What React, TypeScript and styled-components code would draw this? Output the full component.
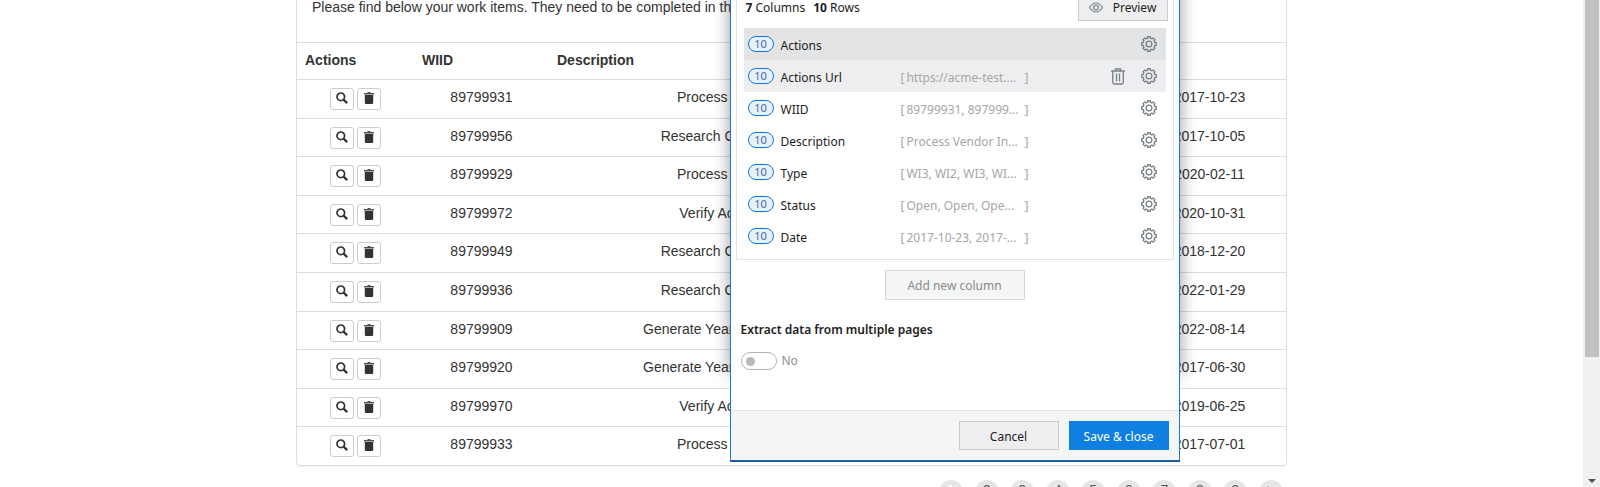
import React from "react";
import styled, { createGlobalStyle, css } from "styled-components";

const ui = `"Noto Sans", "Open Sans", sans-serif`;
const web = `"Liberation Sans", Arial, sans-serif`;

const GlobalStyle = createGlobalStyle`
  *, *::before, *::after { box-sizing: border-box; }
  body { margin: 0; background: #fff; overflow: hidden; }
  button { font: inherit; cursor: pointer; }
`;

const Viewport = styled.div`
  position: relative;
  display: flex;
  height: 100vh;
  overflow: hidden;
`;

const Page = styled.main`
  position: relative;
  flex: 1;
  min-width: 0;
  overflow: hidden;
  font: 14px/20px ${web};
  color: #333;
`;

const Container = styled.div`
  max-width: 991px;
  margin: -9px auto 0;
`;

const Panel = styled.section`
  border: 1px solid #ddd;
  border-radius: 4px;
  box-shadow: 0 1px 1px rgba(0, 0, 0, 0.05);
`;

const Intro = styled.p`
  margin: 0;
  padding: 5px 15px 25px;
  white-space: nowrap;
  overflow: hidden;
`;

const Table = styled.table`
  width: 100%;
  height: 423px;
  border-collapse: collapse;
  table-layout: fixed;
  line-height: 18px;
`;

const HeadCell = styled.th<{ $width?: number }>`
  width: ${(p) => (p.$width ? `${p.$width}px` : "auto")};
  height: 37px;
  padding: 8px;
  border-top: 1px solid #ddd;
  text-align: left;
  vertical-align: top;
`;

const Cell = styled.td`
  padding: 8px 8px 7px;
  border-top: 1px solid #ddd;
  text-align: center;
  vertical-align: top;
  white-space: nowrap;
`;

const CellActions = styled.div`
  display: flex;
  justify-content: center;
  gap: 3px;
`;

const TinyButton = styled.button`
  display: flex;
  align-items: center;
  justify-content: center;
  width: 24px;
  height: 22px;
  padding: 0 0 2px;
  border: 1px solid #ccc;
  border-radius: 3px;
  background: #fff;
  color: #333;
`;

const Pager = styled.nav`
  display: flex;
  justify-content: space-between;
  width: 344px;
  margin: 14px 4px 0 auto;
`;

const PagerButton = styled.button<{ $current?: boolean }>`
  width: 24px;
  height: 24px;
  padding: 0 0 4px;
  border: 0;
  border-radius: 50%;
  background: #e6e6e6;
  color: ${(p) => (p.$current ? "#fff" : "#555")};
  font-weight: ${(p) => (p.$current ? 700 : 400)};
  line-height: 20px;
`;

const Scrollbar = styled.div`
  display: flex;
  flex-direction: column;
  justify-content: space-between;
  align-items: center;
  width: 17px;
  background: #f0f0f0;
`;

const Thumb = styled.div`
  width: 14px;
  height: 357px;
  background: #c1c1c1;
`;

const ArrowDown = styled.div`
  margin-bottom: 4px;
  border: 4px solid transparent;
  border-top-color: #505050;
  border-bottom: 0;
`;

const Dialog = styled.div`
  position: absolute;
  top: -21px;
  left: calc(50% - 62px);
  width: 450px;
  font: 12px/18px ${ui};
  color: #1c1c1c;

  &::before {
    content: "";
    position: absolute;
    inset: 0 0 88px;
    box-shadow: 0 0 16px rgba(0, 0, 0, 0.4);
  }
`;

const DialogFrame = styled.div`
  position: relative;
  border: 1px solid #1976d2;
  border-bottom: 2px solid #1b5e9f;
  background: #fff;
`;

const ColumnsBox = styled.section`
  margin: 0 5px;
  padding: 12px 7px 7px;
  border: 1px solid #e1e3e5;
  border-top: 0;
`;

const Summary = styled.header`
  display: flex;
  justify-content: space-between;
  align-items: center;
  margin: 0 -2px 7px 2px;
`;

const Counts = styled.p`
  display: flex;
  gap: 8px;
  margin: 0;
  padding-top: 2px;

  b { font-weight: 700; }
`;

const PlainButton = styled.button<{ $tone?: "muted" | "primary"; $width: number; $tall?: boolean }>`
  display: flex;
  align-items: center;
  justify-content: center;
  gap: 10px;
  width: ${(p) => p.$width}px;
  height: ${(p) => (p.$tall ? 30 : 29)}px;
  padding: 2px 0 0;
  border: 1px solid #c8cacc;
  background: #eeeef0;
  color: #1c1c1c;
  ${(p) => p.$tone === "muted" && css`
    border-color: #d6d8da;
    background: #f4f6f6;
    color: #8a8a8a;
  `}
  ${(p) => p.$tone === "primary" && css`
    border-color: #0f7fe2;
    background: #0f7fe2;
    color: #fff;
  `}
`;

const ColumnList = styled.ul`
  margin: 0;
  padding: 0;
  list-style: none;
`;

const ColumnRow = styled.li<{ $shade?: string }>`
  display: flex;
  align-items: center;
  height: 32px;
  padding: 0 9px 0 4px;
  background: ${(p) => p.$shade ?? "transparent"};
`;

const Badge = styled.span`
  width: 26px;
  height: 16px;
  margin-right: 7px;
  border: 1px solid #1976d2;
  border-radius: 8px;
  background: #e8f0fa;
  color: #3a6cab;
  font-size: 11px;
  line-height: 14px;
  text-align: center;
`;

const ColumnName = styled.span`
  width: 120px;
  padding-top: 4px;
`;

const Sample = styled.span`
  display: flex;
  justify-content: space-between;
  width: 128px;
  padding-top: 4px;
  color: #a6a6a6;
  white-space: nowrap;
`;

const SampleText = styled.span`
  flex: 1;
  padding-left: 2px;
`;

const RowTools = styled.span`
  display: flex;
  align-items: center;
  gap: 16px;
  margin-left: auto;
`;

const IconButton = styled.button`
  display: flex;
  padding: 0;
  border: 0;
  background: none;
  color: #75818b;
`;

const AddBar = styled.div`
  display: flex;
  justify-content: center;
  padding: 10px 0 21px;
`;

const Paging = styled.section`
  padding: 0 10px 40px;
`;

const PagingTitle = styled.h2`
  margin: 0 0 13px;
  font-size: 12px;
  font-weight: 600;
  line-height: 18px;
`;

const Toggle = styled.label`
  display: flex;
  align-items: center;
  gap: 5px;
  color: #8f8f8f;
`;

const ToggleInput = styled.input`
  appearance: none;
  display: flex;
  align-items: center;
  width: 36px;
  height: 18px;
  margin: 0;
  padding: 0 4px;
  border: 1px solid #b4b4b4;
  border-radius: 9px;
  background: #fff;

  &::before {
    content: "";
    width: 9px;
    height: 9px;
    border-radius: 50%;
    background: #b8b8b8;
  }
  &:checked { justify-content: flex-end; }
`;

const DialogFooter = styled.footer`
  display: flex;
  justify-content: flex-end;
  gap: 10px;
  padding: 10px;
  border-top: 1px solid #e4e6e6;
  background: #f4f6f6;
`;

const SearchIcon = () => (
  <svg width="12" height="12" viewBox="0 0 12 12" fill="none" stroke="currentColor" aria-hidden="true">
    <circle cx="4.8" cy="4.8" r="3.8" strokeWidth="1.7" />
    <path d="M7.6 7.6 11.2 11.1" strokeWidth="2.2" />
  </svg>
);

const BinIcon = () => (
  <svg width="12" height="12" viewBox="0 0 12 12" fill="currentColor" aria-hidden="true">
    <path d="M4.5 0h3v1h3.5v1.6H1V1h3.5z" opacity=".85" />
    <path d="M1.8 3h8.4v7.8q0 1.2-1.2 1.2H3q-1.2 0-1.2-1.2z" />
  </svg>
);

const OutlineBinIcon = () => (
  <svg width="14" height="17" viewBox="0 0 14 17" fill="none" stroke="currentColor" strokeWidth="1.3" aria-hidden="true">
    <path d="M0 3h14M4.5 3V1h5v2M1.7 3v11.5q0 1.5 1.5 1.5h7.6q1.5 0 1.5-1.5V3M5.5 5.5v8M8.5 5.5v8" />
  </svg>
);

const EyeIcon = () => (
  <svg width="14" height="11" viewBox="0 0 14 11" fill="none" stroke="#7c868e" strokeWidth="1.2" aria-hidden="true">
    <path d="M.6 5.5Q3.2 1 7 1t6.4 4.5Q10.8 10 7 10T.6 5.5z" />
    <circle cx="7" cy="5.5" r="2.4" />
  </svg>
);

const gearPath = (() => {
  const points: string[] = [];
  const teeth = 8;
  for (let i = 0; i < teeth; i++) {
    const mid = (i * 2 * Math.PI) / teeth;
    const corners: [number, number][] = [[-0.22, 6], [-0.19, 7.4], [0.19, 7.4], [0.22, 6]];
    corners.forEach(([offset, radius]) => {
      const x = 8 + radius * Math.sin(mid + offset);
      const y = 8 - radius * Math.cos(mid + offset);
      points.push(`${x.toFixed(2)} ${y.toFixed(2)}`);
    });
  }
  return `M${points.join("L")}z`;
})();

const GearIcon = () => (
  <svg width="16" height="16" viewBox="0 0 16 16" fill="none" stroke="currentColor" strokeWidth="1.3" strokeLinejoin="round" aria-hidden="true">
    <path d={gearPath} />
    <circle cx="8" cy="8" r="2.9" />
  </svg>
);

const items = [
  ["89799931", "Process Vendor Invoices", "WI3", "2017-10-23"],
  ["89799956", "Research Clients Check Copy", "WI2", "2017-10-05"],
  ["89799929", "Process Vendor Invoices", "WI3", "2020-02-11"],
  ["89799972", "Verify Account Positions", "WI1", "2020-10-31"],
  ["89799949", "Research Clients Check Copy", "WI2", "2018-12-20"],
  ["89799936", "Research Clients Check Copy", "WI2", "2022-01-29"],
  ["89799909", "Generate Yearly Report for Vendors", "WI4", "2022-08-14"],
  ["89799920", "Generate Yearly Report for Vendors", "WI4", "2017-06-30"],
  ["89799970", "Verify Account Positions", "WI1", "2019-06-25"],
  ["89799933", "Process Vendor Invoices", "WI3", "2017-07-01"],
];

type Column = { name: string; sample?: string; shade?: string; removable?: boolean };

const columns: Column[] = [
  { name: "Actions", shade: "#e2e4e5" },
  { name: "Actions Url", sample: "https://acme-test....", shade: "#eeeef0", removable: true },
  { name: "WIID", sample: "89799931, 897999..." },
  { name: "Description", sample: "Process Vendor In..." },
  { name: "Type", sample: "WI3, WI2, WI3, WI..." },
  { name: "Status", sample: "Open, Open, Ope..." },
  { name: "Date", sample: "2017-10-23, 2017-..." },
];

const pages = ["1", "2", "3", "4", "5", "6", "7", "8", "9", ">"];

export default function App() {
  return (
    <Viewport>
      <GlobalStyle />
      <Page>
        <Container>
          <Panel>
            <Intro>Please find below your work items. They need to be completed in the given order.</Intro>
            <Table>
              <thead>
                <tr>
                  <HeadCell $width={117}>Actions</HeadCell>
                  <HeadCell $width={135}>WIID</HeadCell>
                  <HeadCell>Description</HeadCell>
                  <HeadCell $width={82}>Type</HeadCell>
                  <HeadCell $width={92}>Status</HeadCell>
                  <HeadCell $width={153}>Date</HeadCell>
                </tr>
              </thead>
              <tbody>
                {items.map(([id, description, type, date]) => (
                  <tr key={id}>
                    <Cell>
                      <CellActions>
                        <TinyButton aria-label={`View ${id}`}><SearchIcon /></TinyButton>
                        <TinyButton aria-label={`Delete ${id}`}><BinIcon /></TinyButton>
                      </CellActions>
                    </Cell>
                    <Cell>{id}</Cell>
                    <Cell>{description}</Cell>
                    <Cell>{type}</Cell>
                    <Cell>Open</Cell>
                    <Cell>{date}</Cell>
                  </tr>
                ))}
              </tbody>
            </Table>
          </Panel>
          <Pager aria-label="Pages">
            {pages.map((page, index) => (
              <PagerButton key={page} $current={index === 0}>{page}</PagerButton>
            ))}
          </Pager>
        </Container>

        <Dialog role="dialog" aria-label="Extract table data">
          <DialogFrame>
            <ColumnsBox>
              <Summary>
                <Counts>
                  <span><b>7</b> Columns</span>
                  <span><b>10</b> Rows</span>
                </Counts>
                <PlainButton $width={90}><EyeIcon />Preview</PlainButton>
              </Summary>
              <ColumnList>
                {columns.map(({ name, sample, shade, removable }) => (
                  <ColumnRow key={name} $shade={shade}>
                    <Badge>10</Badge>
                    <ColumnName>{name}</ColumnName>
                    {sample && (
                      <Sample>
                        <span>[</span>
                        <SampleText>{sample}</SampleText>
                        <span>]</span>
                      </Sample>
                    )}
                    <RowTools>
                      {removable && <IconButton aria-label={`Remove ${name}`}><OutlineBinIcon /></IconButton>}
                      <IconButton aria-label={`Settings for ${name}`}><GearIcon /></IconButton>
                    </RowTools>
                  </ColumnRow>
                ))}
              </ColumnList>
            </ColumnsBox>
            <AddBar>
              <PlainButton $tone="muted" $width={140} $tall>Add new column</PlainButton>
            </AddBar>
            <Paging>
              <PagingTitle>Extract data from multiple pages</PagingTitle>
              <Toggle><ToggleInput type="checkbox" role="switch" />No</Toggle>
            </Paging>
            <DialogFooter>
              <PlainButton $width={100}>Cancel</PlainButton>
              <PlainButton $tone="primary" $width={100}>Save &amp; close</PlainButton>
            </DialogFooter>
          </DialogFrame>
        </Dialog>
      </Page>
      <Scrollbar aria-hidden="true">
        <Thumb />
        <ArrowDown />
      </Scrollbar>
    </Viewport>
  );
}
